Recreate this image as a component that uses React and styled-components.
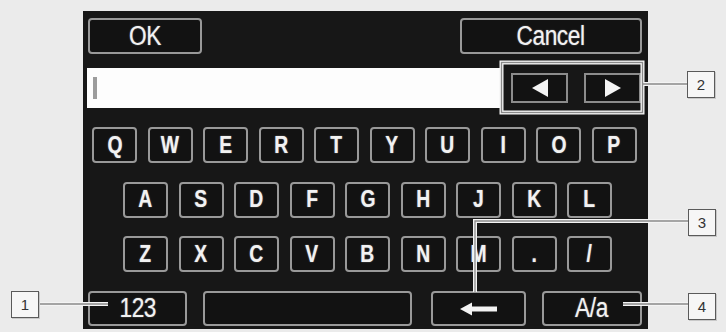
import React from "react";
import styled, { createGlobalStyle } from "styled-components";

const GlobalStyle = createGlobalStyle`
  html, body {
    margin: 0;
    padding: 0;
    background: #ebebeb;
  }
  * {
    box-sizing: border-box;
  }
`;

const ROWS = [
  ["Q", "W", "E", "R", "T", "Y", "U", "I", "O", "P"],
  ["A", "S", "D", "F", "G", "H", "J", "K", "L"],
  ["Z", "X", "C", "V", "B", "N", "M", ".", "/"],
];

const CALLOUTS = [
  { n: 1, x: 11, y: 291 },
  { n: 2, x: 687, y: 71 },
  { n: 3, x: 688, y: 209 },
  { n: 4, x: 688, y: 293 },
];

const Keyboard = () => {
  return (
    <Stage>
      <Screen>
        <TopBar>
          <Button width={114}>
            <Label>OK</Label>
          </Button>
          <Button width={182}>
            <Label>Cancel</Label>
          </Button>
        </TopBar>

        <InputRow>
          <Field>
            <Caret />
          </Field>
          <ArrowGroup>
            <ArrowKey>
              <Triangle dir="left" />
            </ArrowKey>
            <ArrowKey>
              <Triangle dir="right" />
            </ArrowKey>
          </ArrowGroup>
        </InputRow>

        {ROWS.map((row, i) => (
          <KeyRow key={i} indent={i === 0 ? 9 : 40} first={i === 0}>
            {row.map((k) => (
              <Key key={k}>
                <Label>{k}</Label>
              </Key>
            ))}
          </KeyRow>
        ))}

        <BottomRow>
          <Button width={99} height={35}>
            <Label>123</Label>
          </Button>
          <Button width={209} height={35} />
          <Button width={95} height={35}>
            <svg width="38" height="14" viewBox="0 0 38 14">
              <path d="M0 7 L12 0.5 L12 4.5 L37 4.5 L37 9.5 L12 9.5 L12 13.5 Z" fill="#f2f2f2" />
            </svg>
          </Button>
          <Button width={100} height={35}>
            <Label>A/a</Label>
          </Button>
        </BottomRow>
      </Screen>

      <Leaders width="726" height="332" viewBox="0 0 726 332">
        <g fill="none" stroke="#f4f4f4" strokeWidth="4">
          <rect x="501.5" y="62.5" width="141" height="50" />
          <path d="M40 304 H108" />
          <path d="M643 84 H688" />
          <path d="M688 221 H475 V292" />
          <path d="M623 304 H688" />
        </g>
        <g fill="none" stroke="#8a8a8a" strokeWidth="1.3">
          <rect x="501.5" y="62.5" width="141" height="50" />
          <path d="M40 304 H108" />
          <path d="M643 84 H688" />
          <path d="M688 221 H475 V292" />
          <path d="M623 304 H688" />
        </g>
      </Leaders>

      {CALLOUTS.map((c) => (
        <Badge key={c.n} style={{ left: c.x, top: c.y }}>
          {c.n}
        </Badge>
      ))}
    </Stage>
  );
};

const Stage = styled.div`
  position: relative;
  width: 726px;
  height: 332px;
  padding: 11px 0 0 83px;
  background: #ebebeb;
  overflow: hidden;
`;

const Screen = styled.div`
  width: 565px;
  height: 318px;
  background: #171717;
  display: flex;
  flex-direction: column;
  font-family: "Liberation Sans Narrow", "Liberation Sans", Arial, sans-serif;
  color: #f2f2f2;
`;

const Label = styled.span`
  display: inline-block;
  transform: scaleX(0.84);
  text-shadow: 0 0 1.5px rgba(255, 255, 255, 0.55);
`;

const TopBar = styled.div`
  display: flex;
  justify-content: space-between;
  padding: 7px 6px 0 5px;
`;

const Button = styled.div`
  width: ${(p) => p.width}px;
  height: ${(p) => p.height || 36}px;
  border: 2.5px solid #999;
  border-radius: 4px;
  background: #121212;
  display: flex;
  align-items: center;
  justify-content: center;
  font-size: 27px;
  line-height: 1;
  letter-spacing: -0.5px;
`;

const InputRow = styled.div`
  display: flex;
  align-items: center;
  margin-top: 14px;
  padding-left: 4px;
`;

const Field = styled.div`
  width: 416px;
  height: 40px;
  background: #fdfdfd;
  display: flex;
  align-items: center;
  padding-left: 6px;
`;

const Caret = styled.div`
  width: 4px;
  height: 22px;
  background: #9c9c9c;
`;

const ArrowGroup = styled.div`
  display: flex;
  gap: 16px;
  margin-left: 8px;
`;

const ArrowKey = styled.div`
  width: 57px;
  height: 30px;
  border: 2px solid #8c8c8c;
  background: #121212;
  display: flex;
  align-items: center;
  justify-content: center;
`;

const Triangle = styled.div`
  width: 0;
  height: 0;
  border-top: 9px solid transparent;
  border-bottom: 9px solid transparent;
  ${(p) =>
    p.dir === "left"
      ? "border-right: 16px solid #f4f4f4;"
      : "border-left: 16px solid #f4f4f4;"}
`;

const KeyRow = styled.div`
  display: flex;
  gap: 10.5px;
  padding-left: ${(p) => p.indent}px;
  margin-top: ${(p) => (p.first ? 19 : 18.5)}px;
`;

const Key = styled.div`
  width: 45px;
  height: 36px;
  border: 2.5px solid #999;
  border-radius: 4px;
  background: #121212;
  display: flex;
  align-items: center;
  justify-content: center;
  font-size: 23px;
  font-weight: 700;
  line-height: 1;
`;

const BottomRow = styled.div`
  display: flex;
  gap: 16px;
  padding-left: 5px;
  margin-top: 19px;

  & > :nth-child(3) {
    margin-left: 3px;
  }
`;

const Leaders = styled.svg`
  position: absolute;
  left: 0;
  top: 0;
  pointer-events: none;
`;

const Badge = styled.div`
  position: absolute;
  width: 28px;
  height: 27px;
  border: 1.5px solid #5a5a5a;
  background: #f6f6f6;
  display: flex;
  align-items: center;
  justify-content: center;
  font-family: "Liberation Sans", Arial, sans-serif;
  font-size: 15px;
  color: #333;
  box-shadow: 1px 1px 0 #c8c8c8;
`;

export default function App() {
  return (
    <>
      <GlobalStyle />
      <Keyboard />
    </>
  );
}
